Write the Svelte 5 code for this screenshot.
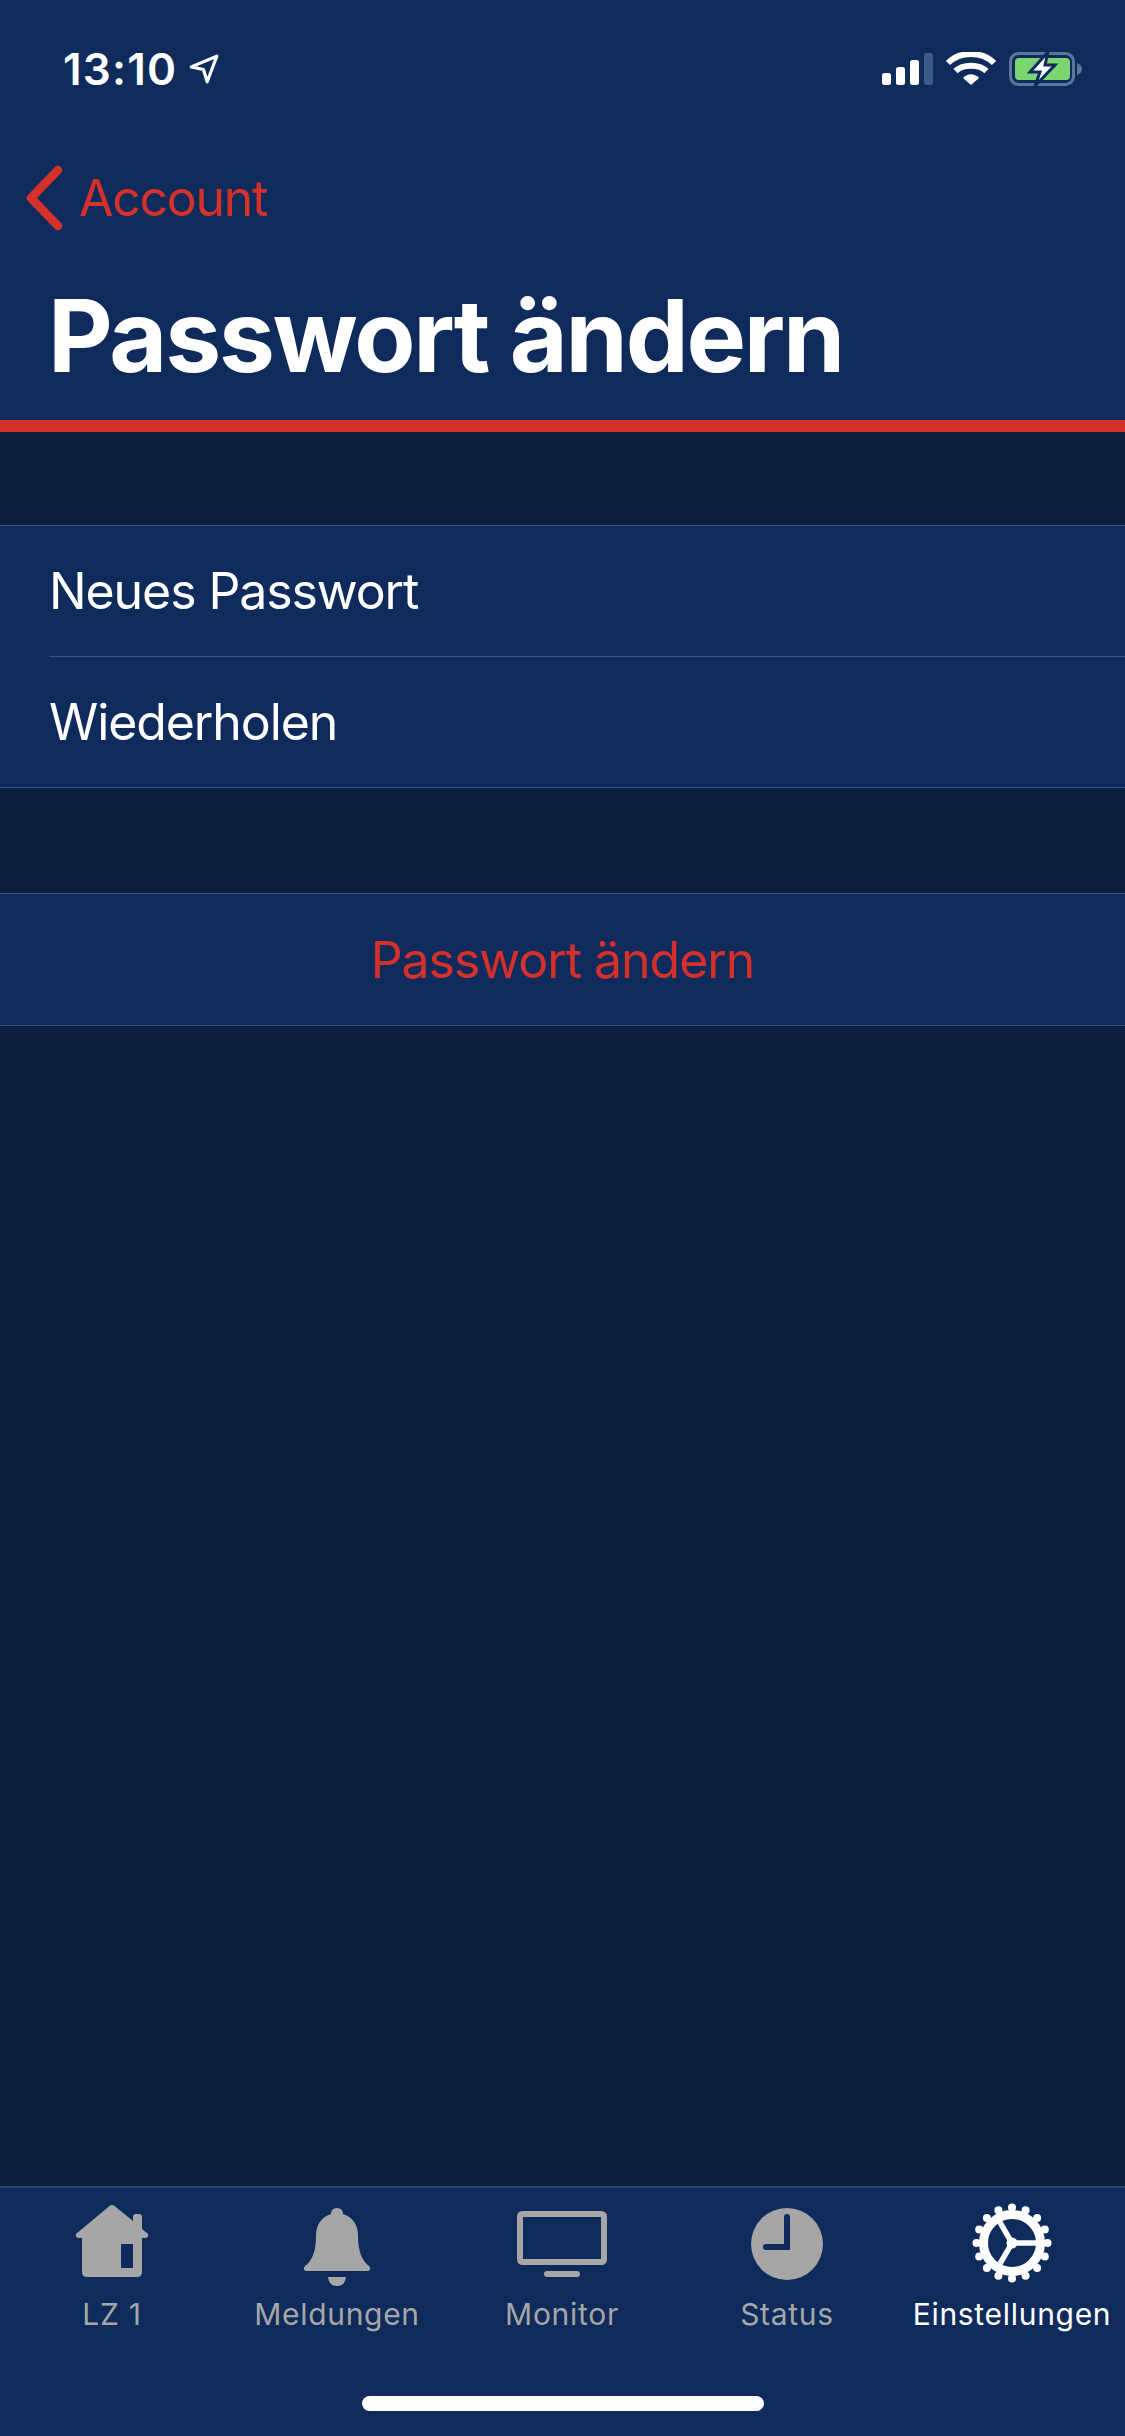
<script>
	const teeth = Array.from({ length: 16 }, (_, i) => {
		const a = (i * Math.PI) / 8;
		return { x: 45 + 35.5 * Math.cos(a), y: 45 + 35.5 * Math.sin(a) };
	});
	const spokes = [0, 120, 240].map((d) => ({
		x: 45 + 28 * Math.cos((d * Math.PI) / 180),
		y: 45 + 28 * Math.sin((d * Math.PI) / 180)
	}));
</script>

<div class="screen">
	<header class="top">
		<div class="status">
			<div class="time">
				<span>13:10</span>
				<svg width="32" height="32" viewBox="0 0 30 30">
					<path d="M3 13 L27 3 L18 27 L14.5 15.5 Z" fill="none" stroke="#fff" stroke-width="3" stroke-linejoin="round" />
				</svg>
			</div>
			<svg class="indicators" width="202" height="36" viewBox="0 0 202 36">
				<rect x="0" y="21" width="9" height="12" rx="2.5" fill="#fff" />
				<rect x="14" y="15" width="9" height="18" rx="2.5" fill="#fff" />
				<rect x="28" y="8" width="9" height="25" rx="2.5" fill="#fff" />
				<rect x="42" y="1" width="9" height="32" rx="2.5" fill="#3f5a87" />
				<path d="M66 11 C78 -1 100 -1 112 11" fill="none" stroke="#fff" stroke-width="6" />
				<path d="M73.5 19 C81 12 97 12 104.500 19" fill="none" stroke="#fff" stroke-width="6" />
				<path d="M81 26 C86 21 92 21 97 26 L89 33 Z" fill="#fff" />
				<rect x="128.500" y="1.500" width="63" height="31" rx="8" fill="none" stroke="#5c7599" stroke-width="3" />
				<rect x="133" y="6" width="55" height="22" rx="4" fill="#7bd672" />
				<path d="M195 11 Q200 13 200 17 Q200 21 195 23 Z" fill="#5c7599" />
				<path d="M166 0 L148 20 L158 20 L153 34 L173 13 L163 13 Z" fill="#fff" stroke="#0f2b5c" stroke-width="3" stroke-linejoin="miter" />
			</svg>
		</div>
		<nav class="back">
			<svg width="40" height="66" viewBox="0 0 40 66">
				<path d="M33 5 L6 33 L33 61" fill="none" stroke="#d6302b" stroke-width="8.500" stroke-linecap="round" stroke-linejoin="round" />
			</svg>
			<span>Account</span>
		</nav>
		<h1>Passwort ändern</h1>
	</header>

	<main class="content">
		<section class="group">
			<div class="row">
				<div class="field">Neues Passwort</div>
			</div>
			<div class="row">
				<div class="field last">Wiederholen</div>
			</div>
		</section>
		<section class="group action">
			<button>Passwort ändern</button>
		</section>
	</main>

	<footer class="tabbar">
		<div class="tabs">
			<div class="tab">
				<svg width="90" height="90" viewBox="0 0 90 90">
					<path fill-rule="evenodd" fill="#a6a6a6" d="M42.500 8 Q45 6 47.500 8 L66 23 L66 19 Q66 16 69 16 L72 16 Q75 16 75 19 L75 31 L80.500 35.500 Q82 37 81 38.500 Q80 40 78 40 L75 40 L75 74 Q75 79 70 79 L20 79 Q15 79 15 74 L15 40 L12 40 Q10 40 9 38.500 Q8 37 9.500 35.500 Z M54 46 L54 70 L66 70 L66 46 Z" />
				</svg>
				<span>LZ 1</span>
			</div>
			<div class="tab">
				<svg width="90" height="90" viewBox="0 0 90 90">
					<path fill="#a6a6a6" d="M39 16 Q39 10 45 10 Q51 10 51 16 Q66 21 66 38 Q66 60 77 68 Q79 70 78 71.500 Q77.500 73 75 73 L15 73 Q12.500 73 12 71.500 Q11 70 13 68 Q24 60 24 38 Q24 21 39 16 Z" />
					<path fill="#a6a6a6" d="M36 79 L54 79 Q53 88 45 88 Q37 88 36 79 Z" />
				</svg>
				<span>Meldungen</span>
			</div>
			<div class="tab">
				<svg width="90" height="90" viewBox="0 0 90 90">
					<rect x="3" y="16" width="84" height="48" rx="2.500" fill="none" stroke="#a6a6a6" stroke-width="6" />
					<rect x="27" y="73" width="36" height="6" rx="3" fill="#a6a6a6" />
				</svg>
				<span>Monitor</span>
			</div>
			<div class="tab">
				<svg width="90" height="90" viewBox="0 0 90 90">
					<circle cx="45" cy="46" r="36" fill="#a6a6a6" />
					<path d="M45 19 L45 49 L24 49" fill="none" stroke="#0f2b5c" stroke-width="6" stroke-linecap="round" />
				</svg>
				<span>Status</span>
			</div>
			<div class="tab active">
				<svg width="90" height="90" viewBox="0 0 90 90">
					{#each teeth as t}
						<circle cx={t.x} cy={t.y} r="4" fill="#fff" />
					{/each}
					<circle cx="45" cy="45" r="28.500" fill="none" stroke="#fff" stroke-width="9" />
					{#each spokes as s}
						<line x1="45" y1="45" x2={s.x} y2={s.y} stroke="#fff" stroke-width="5.500" />
					{/each}
					<circle cx="45" cy="45" r="5.500" fill="#fff" />
				</svg>
				<span>Einstellungen</span>
			</div>
		</div>
		<div class="home-bar"></div>
	</footer>
</div>

<style>
	:global(body) {
		margin: 0;
		background: #0c1f3f;
	}
	.screen {
		width: 1125px;
		height: 2436px;
		display: flex;
		flex-direction: column;
		background: #0c1f3f;
		color: #fff;
		font-family: Inter, "Liberation Sans", sans-serif;
		overflow: hidden;
	}
	.top {
		background: #0f2b5c;
		border-bottom: 12px solid #d6302b;
		height: 420px;
		flex: none;
	}
	.status {
		height: 132px;
		display: flex;
		justify-content: space-between;
		align-items: flex-start;
		padding: 52px 41px 0 63px;
		box-sizing: border-box;
	}
	.time {
		display: flex;
		align-items: center;
		gap: 11px;
		font-size: 44px;
		font-weight: 600;
		line-height: 34px;
		letter-spacing: 1.2px;
	}
	.back {
		display: flex;
		align-items: center;
		gap: 14px;
		padding: 33px 0 0 25px;
		color: #d6302b;
		font-size: 50px;
		line-height: 66px;
		letter-spacing: -1.3px;
	}
	h1 {
		margin: 0;
		padding: 44px 0 0 48px;
		font-size: 100px;
		font-weight: 700;
		line-height: 121px;
		letter-spacing: -2.2px;
	}
	.content {
		flex: 1;
		padding-top: 93px;
		display: flex;
		flex-direction: column;
		gap: 105px;
	}
	.group {
		background: #0f2b5c;
		border-top: 1px solid #3a5580;
		border-bottom: 1px solid #3a5580;
	}
	.row {
		padding-left: 49px;
	}
	.field {
		height: 130px;
		display: flex;
		align-items: center;
		font-size: 50px;
		letter-spacing: -1.1px;
		border-bottom: 1px solid #3a5580;
	}
	.field.last {
		border-bottom: 0;
	}
	.action button {
		display: block;
		width: 100%;
		height: 131px;
		border: 0;
		background: none;
		color: #d6302b;
		font: inherit;
		font-size: 50px;
		letter-spacing: -1.05px;
	}
	.tabbar {
		flex: none;
		height: 250px;
		box-sizing: border-box;
		background: #0f2b5c;
		border-top: 2px solid #2c4468;
		padding-top: 10px;
	}
	.tabs {
		display: grid;
		grid-template-columns: repeat(5, 1fr);
	}
	.tab {
		display: flex;
		flex-direction: column;
		align-items: center;
		color: #a6a6a6;
		font-size: 30px;
		line-height: 36px;
		letter-spacing: 0.7px;
		white-space: nowrap;
	}
	.tab svg {
		margin-left: -2px;
	}
	.tab span {
		margin-top: 8px;
		margin-left: -1px;
	}
	.tab.active {
		color: #fff;
	}
	.home-bar {
		width: 402px;
		height: 15px;
		margin: 64px auto 0;
		border-radius: 8px;
		background: #fff;
	}
</style>
